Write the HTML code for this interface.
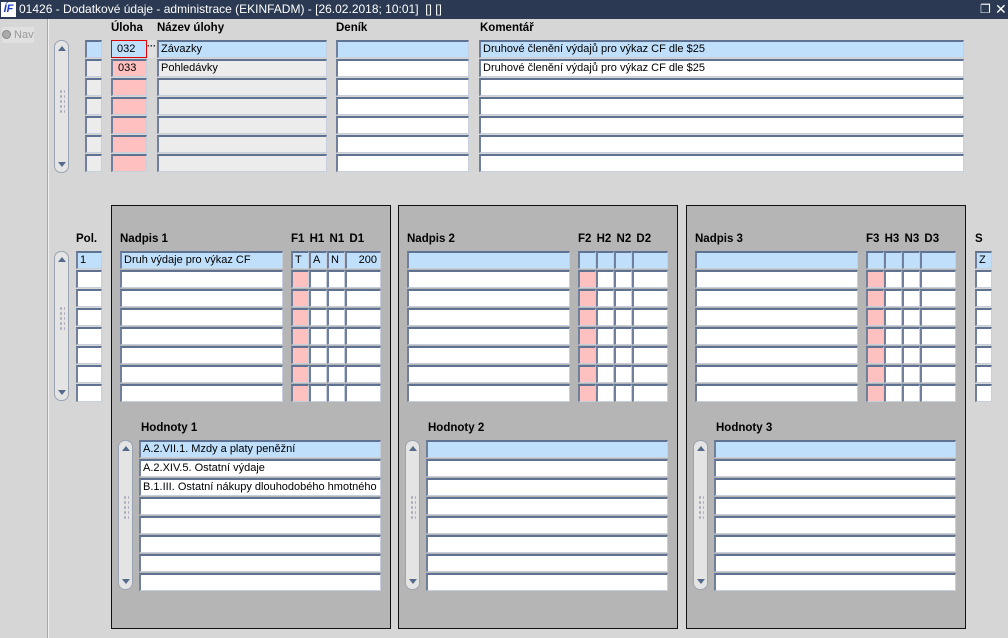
<!DOCTYPE html>
<html><head><meta charset="utf-8"><style>
*{box-sizing:border-box;margin:0;padding:0}
body{width:1008px;height:638px;overflow:hidden;background:#d6d6d6;font-family:"Liberation Sans",sans-serif;font-size:12px;position:relative}
.a{position:absolute}
.t{position:absolute;left:0;top:0;width:1008px;height:19px;background:#2b3a52;color:#fff;font-size:12px;line-height:19px}
.f{position:absolute;height:18px;background:#fff;border:1px solid #c8cfdc;border-top:2px solid #5f7291;border-left:2px solid #6f7f9c;font-size:11px;line-height:14px;padding-left:2px;white-space:nowrap;overflow:hidden;color:#000}
.b{background:#bfdffb}.p{background:#ffc0c0}.g{background:#ececec}
.l{position:absolute;font-weight:bold;font-size:11.5px;color:#000}
.sb{position:absolute;width:15px;border:1px solid #9aa3b2;border-radius:7px;background:#e4e4e4}
.sb:before{content:"";position:absolute;left:3px;top:5px;border:4px solid transparent;border-bottom:5px solid #556a8a;border-top:0}
.sb:after{content:"";position:absolute;left:3px;bottom:5px;border:4px solid transparent;border-top:5px solid #556a8a;border-bottom:0}
.dots{position:absolute;left:4px;width:6px;height:24px;background-image:radial-gradient(#aab 1px,transparent 1.2px);background-size:4px 5px}
.pn{position:absolute;top:205px;width:280px;height:424px;background:#b5b5b5;border:1px solid #111}
</style></head><body>
<div class="t"><span class="a" style="left:1px;top:2px;width:15px;height:15px;background:#fff;color:#1a3cc8;font:italic bold 11px 'Liberation Sans',sans-serif;line-height:15px;text-align:center">ÍF</span><span class="a" style="left:19px">01426 - Dodatkové údaje - administrace (EKINFADM) - [26.02.2018; 10:01]&nbsp; [] []</span><span class="a" style="left:980px;font-size:12px">&#x2750;</span><span class="a" style="left:995px;font-size:14px">✕</span></div>
<div class="a" style="left:47px;top:19px;width:1px;height:619px;background:#a8a8a8"></div>
<div class="a" style="left:48px;top:19px;width:1px;height:619px;background:#f0f0f0"></div>
<div class="a" style="left:2px;top:27px;width:32px;height:16px;background:#e0e0e0;color:#999;font-size:11px;line-height:16px"><span style="display:inline-block;width:9px;height:9px;border-radius:50%;background:#aaa;border:1px solid #888;vertical-align:-1px"></span> Nav</div>

<div class="l" style="left:111px;top:22px">Úloha</div>
<div class="l" style="left:157px;top:22px">Název úlohy</div>
<div class="l" style="left:336px;top:22px">Deník</div>
<div class="l" style="left:480px;top:22px">Komentář</div>
<div class="sb" style="left:54px;top:40px;height:133px"><div class="dots" style="top:48px"></div></div>

<div class="f b" style="left:85px;top:40px;width:17px"></div>
<div class="f b" style="left:111px;top:40px;width:36px;border:1px solid #e00000;padding-left:5px;line-height:16px">032</div>
<div class="a" style="left:147px;top:40px;width:9px;height:18px;background:#e0e0e0;font-size:9px;font-weight:bold;line-height:12px">···</div>
<div class="f b" style="left:157px;top:40px;width:170px">Závazky</div>
<div class="f b" style="left:336px;top:40px;width:133px"></div>
<div class="f b" style="left:479px;top:40px;width:485px">Druhové členění výdajů pro výkaz CF dle $25</div>

<div class="f g" style="left:85px;top:59px;width:17px"></div>
<div class="f p" style="left:111px;top:59px;width:36px;padding-left:5px">033</div>
<div class="f g" style="left:157px;top:59px;width:170px">Pohledávky</div>
<div class="f" style="left:336px;top:59px;width:133px"></div>
<div class="f" style="left:479px;top:59px;width:485px">Druhové členění výdajů pro výkaz CF dle $25</div>

<div class="f g" style="left:85px;top:78px;width:17px"></div><div class="f p" style="left:111px;top:78px;width:36px"></div><div class="f g" style="left:157px;top:78px;width:170px"></div><div class="f" style="left:336px;top:78px;width:133px"></div><div class="f" style="left:479px;top:78px;width:485px"></div>
<div class="f g" style="left:85px;top:97px;width:17px"></div><div class="f p" style="left:111px;top:97px;width:36px"></div><div class="f g" style="left:157px;top:97px;width:170px"></div><div class="f" style="left:336px;top:97px;width:133px"></div><div class="f" style="left:479px;top:97px;width:485px"></div>
<div class="f g" style="left:85px;top:116px;width:17px"></div><div class="f p" style="left:111px;top:116px;width:36px"></div><div class="f g" style="left:157px;top:116px;width:170px"></div><div class="f" style="left:336px;top:116px;width:133px"></div><div class="f" style="left:479px;top:116px;width:485px"></div>
<div class="f g" style="left:85px;top:135px;width:17px"></div><div class="f p" style="left:111px;top:135px;width:36px"></div><div class="f g" style="left:157px;top:135px;width:170px"></div><div class="f" style="left:336px;top:135px;width:133px"></div><div class="f" style="left:479px;top:135px;width:485px"></div>
<div class="f g" style="left:85px;top:154px;width:17px"></div><div class="f p" style="left:111px;top:154px;width:36px"></div><div class="f g" style="left:157px;top:154px;width:170px"></div><div class="f" style="left:336px;top:154px;width:133px"></div><div class="f" style="left:479px;top:154px;width:485px"></div>

<div class="pn" style="left:111px"></div>
<div class="pn" style="left:398px"></div>
<div class="pn" style="left:686px"></div>

<div class="l" style="left:76px;top:233px">Pol.</div>
<div class="l" style="left:975px;top:233px">S</div>
<div class="sb" style="left:54px;top:251px;height:150px"><div class="dots" style="top:54px"></div></div>
<div class="f b" style="left:76px;top:251px;width:26px">1</div>
<div class="f" style="left:76px;top:270px;width:26px"></div><div class="f" style="left:76px;top:289px;width:26px"></div><div class="f" style="left:76px;top:308px;width:26px"></div><div class="f" style="left:76px;top:327px;width:26px"></div><div class="f" style="left:76px;top:346px;width:26px"></div><div class="f" style="left:76px;top:365px;width:26px"></div><div class="f" style="left:76px;top:384px;width:26px"></div>
<div class="f b" style="left:975px;top:251px;width:17px">Z</div>
<div class="f" style="left:975px;top:270px;width:17px"></div><div class="f" style="left:975px;top:289px;width:17px"></div><div class="f" style="left:975px;top:308px;width:17px"></div><div class="f" style="left:975px;top:327px;width:17px"></div><div class="f" style="left:975px;top:346px;width:17px"></div><div class="f" style="left:975px;top:365px;width:17px"></div><div class="f" style="left:975px;top:384px;width:17px"></div>

<!-- Panel 1 -->
<div class="l" style="left:120px;top:233px">Nadpis 1</div>
<div class="l" style="left:291px;top:233px;word-spacing:2px">F1 H1 N1 D1</div>
<div class="f b" style="left:120px;top:251px;width:163px">Druh výdaje pro výkaz CF</div>
<div class="f b" style="left:291px;top:251px;width:18px">T</div><div class="f b" style="left:309px;top:251px;width:18px">A</div><div class="f b" style="left:327px;top:251px;width:18px">N</div><div class="f b" style="left:345px;top:251px;width:36px;text-align:right;padding-right:3px">200</div>
<div class="f" style="left:120px;top:270px;width:163px"></div><div class="f p" style="left:291px;top:270px;width:18px"></div><div class="f" style="left:309px;top:270px;width:18px"></div><div class="f" style="left:327px;top:270px;width:18px"></div><div class="f" style="left:345px;top:270px;width:36px"></div>
<div class="f" style="left:120px;top:289px;width:163px"></div><div class="f p" style="left:291px;top:289px;width:18px"></div><div class="f" style="left:309px;top:289px;width:18px"></div><div class="f" style="left:327px;top:289px;width:18px"></div><div class="f" style="left:345px;top:289px;width:36px"></div>
<div class="f" style="left:120px;top:308px;width:163px"></div><div class="f p" style="left:291px;top:308px;width:18px"></div><div class="f" style="left:309px;top:308px;width:18px"></div><div class="f" style="left:327px;top:308px;width:18px"></div><div class="f" style="left:345px;top:308px;width:36px"></div>
<div class="f" style="left:120px;top:327px;width:163px"></div><div class="f p" style="left:291px;top:327px;width:18px"></div><div class="f" style="left:309px;top:327px;width:18px"></div><div class="f" style="left:327px;top:327px;width:18px"></div><div class="f" style="left:345px;top:327px;width:36px"></div>
<div class="f" style="left:120px;top:346px;width:163px"></div><div class="f p" style="left:291px;top:346px;width:18px"></div><div class="f" style="left:309px;top:346px;width:18px"></div><div class="f" style="left:327px;top:346px;width:18px"></div><div class="f" style="left:345px;top:346px;width:36px"></div>
<div class="f" style="left:120px;top:365px;width:163px"></div><div class="f p" style="left:291px;top:365px;width:18px"></div><div class="f" style="left:309px;top:365px;width:18px"></div><div class="f" style="left:327px;top:365px;width:18px"></div><div class="f" style="left:345px;top:365px;width:36px"></div>
<div class="f" style="left:120px;top:384px;width:163px"></div><div class="f p" style="left:291px;top:384px;width:18px"></div><div class="f" style="left:309px;top:384px;width:18px"></div><div class="f" style="left:327px;top:384px;width:18px"></div><div class="f" style="left:345px;top:384px;width:36px"></div>
<div class="l" style="left:141px;top:422px">Hodnoty 1</div>
<div class="sb" style="left:118px;top:440px;height:150px"><div class="dots" style="top:54px"></div></div>
<div class="f b" style="left:139px;top:440px;width:242px">A.2.VII.1. Mzdy a platy peněžní</div>
<div class="f" style="left:139px;top:459px;width:242px">A.2.XIV.5. Ostatní výdaje</div>
<div class="f" style="left:139px;top:478px;width:242px">B.1.III. Ostatní nákupy dlouhodobého hmotného a nehmotného</div>
<div class="f" style="left:139px;top:497px;width:242px"></div><div class="f" style="left:139px;top:516px;width:242px"></div><div class="f" style="left:139px;top:535px;width:242px"></div><div class="f" style="left:139px;top:554px;width:242px"></div><div class="f" style="left:139px;top:573px;width:242px"></div>

<!-- Panel 2 -->
<div class="l" style="left:407px;top:233px">Nadpis 2</div>
<div class="l" style="left:578px;top:233px;word-spacing:2px">F2 H2 N2 D2</div>
<div class="f b" style="left:407px;top:251px;width:163px"></div><div class="f b" style="left:578px;top:251px;width:18px"></div><div class="f b" style="left:596px;top:251px;width:18px"></div><div class="f b" style="left:614px;top:251px;width:18px"></div><div class="f b" style="left:632px;top:251px;width:36px"></div>
<div class="f" style="left:407px;top:270px;width:163px"></div><div class="f p" style="left:578px;top:270px;width:18px"></div><div class="f" style="left:596px;top:270px;width:18px"></div><div class="f" style="left:614px;top:270px;width:18px"></div><div class="f" style="left:632px;top:270px;width:36px"></div>
<div class="f" style="left:407px;top:289px;width:163px"></div><div class="f p" style="left:578px;top:289px;width:18px"></div><div class="f" style="left:596px;top:289px;width:18px"></div><div class="f" style="left:614px;top:289px;width:18px"></div><div class="f" style="left:632px;top:289px;width:36px"></div>
<div class="f" style="left:407px;top:308px;width:163px"></div><div class="f p" style="left:578px;top:308px;width:18px"></div><div class="f" style="left:596px;top:308px;width:18px"></div><div class="f" style="left:614px;top:308px;width:18px"></div><div class="f" style="left:632px;top:308px;width:36px"></div>
<div class="f" style="left:407px;top:327px;width:163px"></div><div class="f p" style="left:578px;top:327px;width:18px"></div><div class="f" style="left:596px;top:327px;width:18px"></div><div class="f" style="left:614px;top:327px;width:18px"></div><div class="f" style="left:632px;top:327px;width:36px"></div>
<div class="f" style="left:407px;top:346px;width:163px"></div><div class="f p" style="left:578px;top:346px;width:18px"></div><div class="f" style="left:596px;top:346px;width:18px"></div><div class="f" style="left:614px;top:346px;width:18px"></div><div class="f" style="left:632px;top:346px;width:36px"></div>
<div class="f" style="left:407px;top:365px;width:163px"></div><div class="f p" style="left:578px;top:365px;width:18px"></div><div class="f" style="left:596px;top:365px;width:18px"></div><div class="f" style="left:614px;top:365px;width:18px"></div><div class="f" style="left:632px;top:365px;width:36px"></div>
<div class="f" style="left:407px;top:384px;width:163px"></div><div class="f p" style="left:578px;top:384px;width:18px"></div><div class="f" style="left:596px;top:384px;width:18px"></div><div class="f" style="left:614px;top:384px;width:18px"></div><div class="f" style="left:632px;top:384px;width:36px"></div>
<div class="l" style="left:428px;top:422px">Hodnoty 2</div>
<div class="sb" style="left:405px;top:440px;height:150px"><div class="dots" style="top:54px"></div></div>
<div class="f b" style="left:426px;top:440px;width:242px"></div>
<div class="f" style="left:426px;top:459px;width:242px"></div><div class="f" style="left:426px;top:478px;width:242px"></div><div class="f" style="left:426px;top:497px;width:242px"></div><div class="f" style="left:426px;top:516px;width:242px"></div><div class="f" style="left:426px;top:535px;width:242px"></div><div class="f" style="left:426px;top:554px;width:242px"></div><div class="f" style="left:426px;top:573px;width:242px"></div>

<!-- Panel 3 -->
<div class="l" style="left:695px;top:233px">Nadpis 3</div>
<div class="l" style="left:866px;top:233px;word-spacing:2px">F3 H3 N3 D3</div>
<div class="f b" style="left:695px;top:251px;width:163px"></div><div class="f b" style="left:866px;top:251px;width:18px"></div><div class="f b" style="left:884px;top:251px;width:18px"></div><div class="f b" style="left:902px;top:251px;width:18px"></div><div class="f b" style="left:920px;top:251px;width:36px"></div>
<div class="f" style="left:695px;top:270px;width:163px"></div><div class="f p" style="left:866px;top:270px;width:18px"></div><div class="f" style="left:884px;top:270px;width:18px"></div><div class="f" style="left:902px;top:270px;width:18px"></div><div class="f" style="left:920px;top:270px;width:36px"></div>
<div class="f" style="left:695px;top:289px;width:163px"></div><div class="f p" style="left:866px;top:289px;width:18px"></div><div class="f" style="left:884px;top:289px;width:18px"></div><div class="f" style="left:902px;top:289px;width:18px"></div><div class="f" style="left:920px;top:289px;width:36px"></div>
<div class="f" style="left:695px;top:308px;width:163px"></div><div class="f p" style="left:866px;top:308px;width:18px"></div><div class="f" style="left:884px;top:308px;width:18px"></div><div class="f" style="left:902px;top:308px;width:18px"></div><div class="f" style="left:920px;top:308px;width:36px"></div>
<div class="f" style="left:695px;top:327px;width:163px"></div><div class="f p" style="left:866px;top:327px;width:18px"></div><div class="f" style="left:884px;top:327px;width:18px"></div><div class="f" style="left:902px;top:327px;width:18px"></div><div class="f" style="left:920px;top:327px;width:36px"></div>
<div class="f" style="left:695px;top:346px;width:163px"></div><div class="f p" style="left:866px;top:346px;width:18px"></div><div class="f" style="left:884px;top:346px;width:18px"></div><div class="f" style="left:902px;top:346px;width:18px"></div><div class="f" style="left:920px;top:346px;width:36px"></div>
<div class="f" style="left:695px;top:365px;width:163px"></div><div class="f p" style="left:866px;top:365px;width:18px"></div><div class="f" style="left:884px;top:365px;width:18px"></div><div class="f" style="left:902px;top:365px;width:18px"></div><div class="f" style="left:920px;top:365px;width:36px"></div>
<div class="f" style="left:695px;top:384px;width:163px"></div><div class="f p" style="left:866px;top:384px;width:18px"></div><div class="f" style="left:884px;top:384px;width:18px"></div><div class="f" style="left:902px;top:384px;width:18px"></div><div class="f" style="left:920px;top:384px;width:36px"></div>
<div class="l" style="left:716px;top:422px">Hodnoty 3</div>
<div class="sb" style="left:693px;top:440px;height:150px"><div class="dots" style="top:54px"></div></div>
<div class="f b" style="left:714px;top:440px;width:242px"></div>
<div class="f" style="left:714px;top:459px;width:242px"></div><div class="f" style="left:714px;top:478px;width:242px"></div><div class="f" style="left:714px;top:497px;width:242px"></div><div class="f" style="left:714px;top:516px;width:242px"></div><div class="f" style="left:714px;top:535px;width:242px"></div><div class="f" style="left:714px;top:554px;width:242px"></div><div class="f" style="left:714px;top:573px;width:242px"></div>
</body></html>
